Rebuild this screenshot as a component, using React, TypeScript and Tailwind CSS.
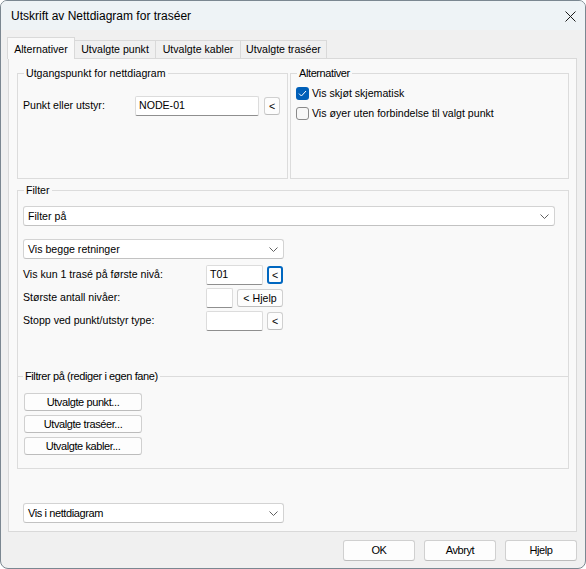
import React from 'react';

const ui = "font-['Liberation_Sans',Arial,sans-serif] text-[10.6px]";
const narrow = "font-['Liberation_Sans_Narrow','Liberation_Sans',Arial,sans-serif] text-[11px] tracking-[-0.4px]";

function Chevron() {
  return (
    <svg width="9" height="5" viewBox="0 0 9 5" className="shrink-0">
      <path d="M0.5 0.5 L4.5 4.5 L8.5 0.5" fill="none" stroke="#606060" strokeWidth="1" />
    </svg>
  );
}

function Combo({ label, className = '', textClass = ui }: { label: string; className?: string; textClass?: string }) {
  return (
    <div
      className={`flex h-[20px] items-center justify-between rounded-[3px] border border-[#d3d3d3] border-b-[#c2c2c2] bg-white pl-[4px] pr-[5px] ${className}`}
    >
      <span className={`${textClass} leading-none text-black`}>{label}</span>
      <Chevron />
    </div>
  );
}

function TextBox({ value = '', className = '' }: { value?: string; className?: string }) {
  return (
    <div
      className={`flex h-[20px] items-center rounded-[2px] border border-[#dcdcdc] border-b-[#8f8f8f] bg-white pl-[3px] ${ui} text-black ${className}`}
    >
      {value}
    </div>
  );
}

function SmallBtn({ label, focused = false, className = '' }: { label: string; focused?: boolean; className?: string }) {
  return (
    <button
      type="button"
      className={`flex h-[18px] items-center justify-center rounded-[3px] bg-[#fdfdfd] ${ui} leading-none text-black ${
        focused ? 'border-2 border-[#0067c0]' : 'border border-[#d0d0d0] border-b-[#bdbdbd]'
      } ${className}`}
    >
      {label}
    </button>
  );
}

function WideBtn({ label, className = '' }: { label: string; className?: string }) {
  return (
    <button
      type="button"
      className={`flex items-center justify-center rounded-[3px] border border-[#d0d0d0] border-b-[#bcbcbc] bg-[#fdfdfd] ${narrow} leading-none text-black ${className}`}
    >
      {label}
    </button>
  );
}

function CheckRow({ label, checked }: { label: string; checked?: boolean }) {
  return (
    <div className="flex h-[13px] items-center gap-[3px]">
      {checked ? (
        <span className="flex h-[13px] w-[13px] items-center justify-center rounded-[3px] bg-[#005fb8]">
          <svg width="9" height="7" viewBox="0 0 9 7">
            <path d="M1 3.6 L3.4 6 L8 1" fill="none" stroke="white" strokeWidth="1" />
          </svg>
        </span>
      ) : (
        <span className="h-[13px] w-[13px] rounded-[3px] border border-[#8a8a8a] bg-[#f7f7f7]" />
      )}
      <span className={`${ui} leading-none text-black`}>{label}</span>
    </div>
  );
}

function Legend({ label, textClass = ui }: { label: string; textClass?: string }) {
  return <legend className={`ml-[1px] px-[2px] ${textClass} leading-[14px] text-black`}>{label}</legend>;
}

export default function App() {
  const tabs = [
    { label: 'Utvalgte punkt', w: 'w-[82px]' },
    { label: 'Utvalgte kabler', w: 'w-[86px]' },
    { label: 'Utvalgte traséer', w: 'w-[87px]' },
  ];
  const rows = [
    { label: 'Vis kun 1 trasé på første nivå:', value: 'T01' },
    { label: 'Største antall nivåer:', value: '' },
    { label: 'Stopp ved punkt/utstyr type:', value: '' },
  ];

  return (
    <div className="h-[569px] w-[586px] bg-white">
      <div className="flex h-[569px] w-[586px] flex-col overflow-hidden rounded-b-[8px] rounded-t-[7px] border border-[#7b8791] bg-[#f0f0f0]">
        {/* Title bar */}
        <div className="flex h-[29px] shrink-0 items-center justify-between bg-[#eef3f6] pl-[10px] pr-[8px]">
          <span className="font-['Liberation_Sans',Arial,sans-serif] text-[12px] text-black">
            Utskrift av Nettdiagram for traséer
          </span>
          <svg width="11" height="11" viewBox="0 0 11 11" className="mr-[1px] mt-[1px]">
            <path d="M0.5 0.5 L10.5 10.5 M10.5 0.5 L0.5 10.5" stroke="#1a1a1a" strokeWidth="1" />
          </svg>
        </div>

        <div className="flex flex-col pl-[7px] pr-[8px] pt-[7px]">
          {/* Tabs */}
          <div className="-ml-[1px] flex items-end">
            <div className={`relative z-10 -mb-[1px] flex h-[22px] w-[68px] items-start justify-center border border-b-0 border-[#d9d9d9] bg-[#f9f9f9] pt-[4px] ${ui} text-black`}>
              Alternativer
            </div>
            {tabs.map((t) => (
              <div
                key={t.label}
                className={`-ml-[1px] flex h-[18px] ${t.w} items-center justify-center border border-b-0 border-[#d9d9d9] bg-[#f0f0f0] ${ui} text-black`}
              >
                {t.label}
              </div>
            ))}
          </div>

          {/* Tab panel */}
          <div className="flex h-[474px] flex-col border border-[#d9d9d9] bg-[#f9f9f9] pl-[8px] pr-[7px] pt-[7px]">
            <div className="flex h-[113px] gap-[2px]">
              <fieldset className="w-[271px] border border-[#dcdcdc] pl-[5px]">
                <Legend label="Utgangspunkt for nettdiagram" />
                <div className="mt-[16px] flex items-center">
                  <span className={`w-[112px] ${ui} text-black`}>Punkt eller utstyr:</span>
                  <TextBox value="NODE-01" className="w-[124px]" />
                  <SmallBtn label="<" className="ml-[5px] w-[16px]" />
                </div>
              </fieldset>
              <fieldset className="flex-1 border border-[#dcdcdc] pl-[5px]">
                <Legend label="Alternativer" textClass={narrow} />
                <div className="mt-[7px] flex flex-col gap-[7px]">
                  <CheckRow label="Vis skjøt skjematisk" checked />
                  <CheckRow label="Vis øyer uten forbindelse til valgt punkt" />
                </div>
              </fieldset>
            </div>

            {/* Filter */}
            <fieldset className="mt-[4px] h-[286px] border border-[#dcdcdc] pl-[5px] pr-[13px]">
              <Legend label="Filter" />
              <Combo label="Filter på" className="mt-[9px]" />
              <Combo label="Vis begge retninger" className="mt-[13px] w-[261px]" />
              <div className="mt-[6px] flex flex-col gap-[3px]">
                {rows.map((r, i) => (
                  <div key={r.label} className="flex items-center">
                    <span className={`w-[183px] ${ui} text-black`}>{r.label}</span>
                    <TextBox value={r.value} className={i === 1 ? 'w-[27px]' : 'w-[57px]'} />
                    {i === 1 ? (
                      <SmallBtn label="< Hjelp" className="ml-[4px] w-[46px]" />
                    ) : (
                      <SmallBtn label="<" focused={i === 0} className="ml-[4px] w-[16px]" />
                    )}
                  </div>
                ))}
              </div>

              <fieldset className="-ml-[5px] -mr-[13px] mt-[38px] border-t border-[#dcdcdc] pl-[6px]">
                <legend className={`-ml-[1px] px-[2px] ${narrow} leading-[14px] text-black`}>
                  Filtrer på (rediger i egen fane)
                </legend>
                <div className="mt-[10px] flex flex-col gap-[4px]">
                  <WideBtn label="Utvalgte punkt..." className="h-[18px] w-[118px]" />
                  <WideBtn label="Utvalgte traséer..." className="h-[18px] w-[118px]" />
                  <WideBtn label="Utvalgte kabler..." className="h-[18px] w-[118px]" />
                </div>
              </fieldset>
            </fieldset>

            <Combo label="Vis i nettdiagram" textClass={narrow} className="ml-[6px] mt-[34px] w-[261px]" />
          </div>

          {/* Footer buttons */}
          <div className="mt-[8px] flex justify-end gap-[9px]">
            <WideBtn label="OK" className="h-[21px] w-[72px]" />
            <WideBtn label="Avbryt" className="h-[21px] w-[72px]" />
            <WideBtn label="Hjelp" className="h-[21px] w-[72px]" />
          </div>
        </div>
      </div>
    </div>
  );
}
